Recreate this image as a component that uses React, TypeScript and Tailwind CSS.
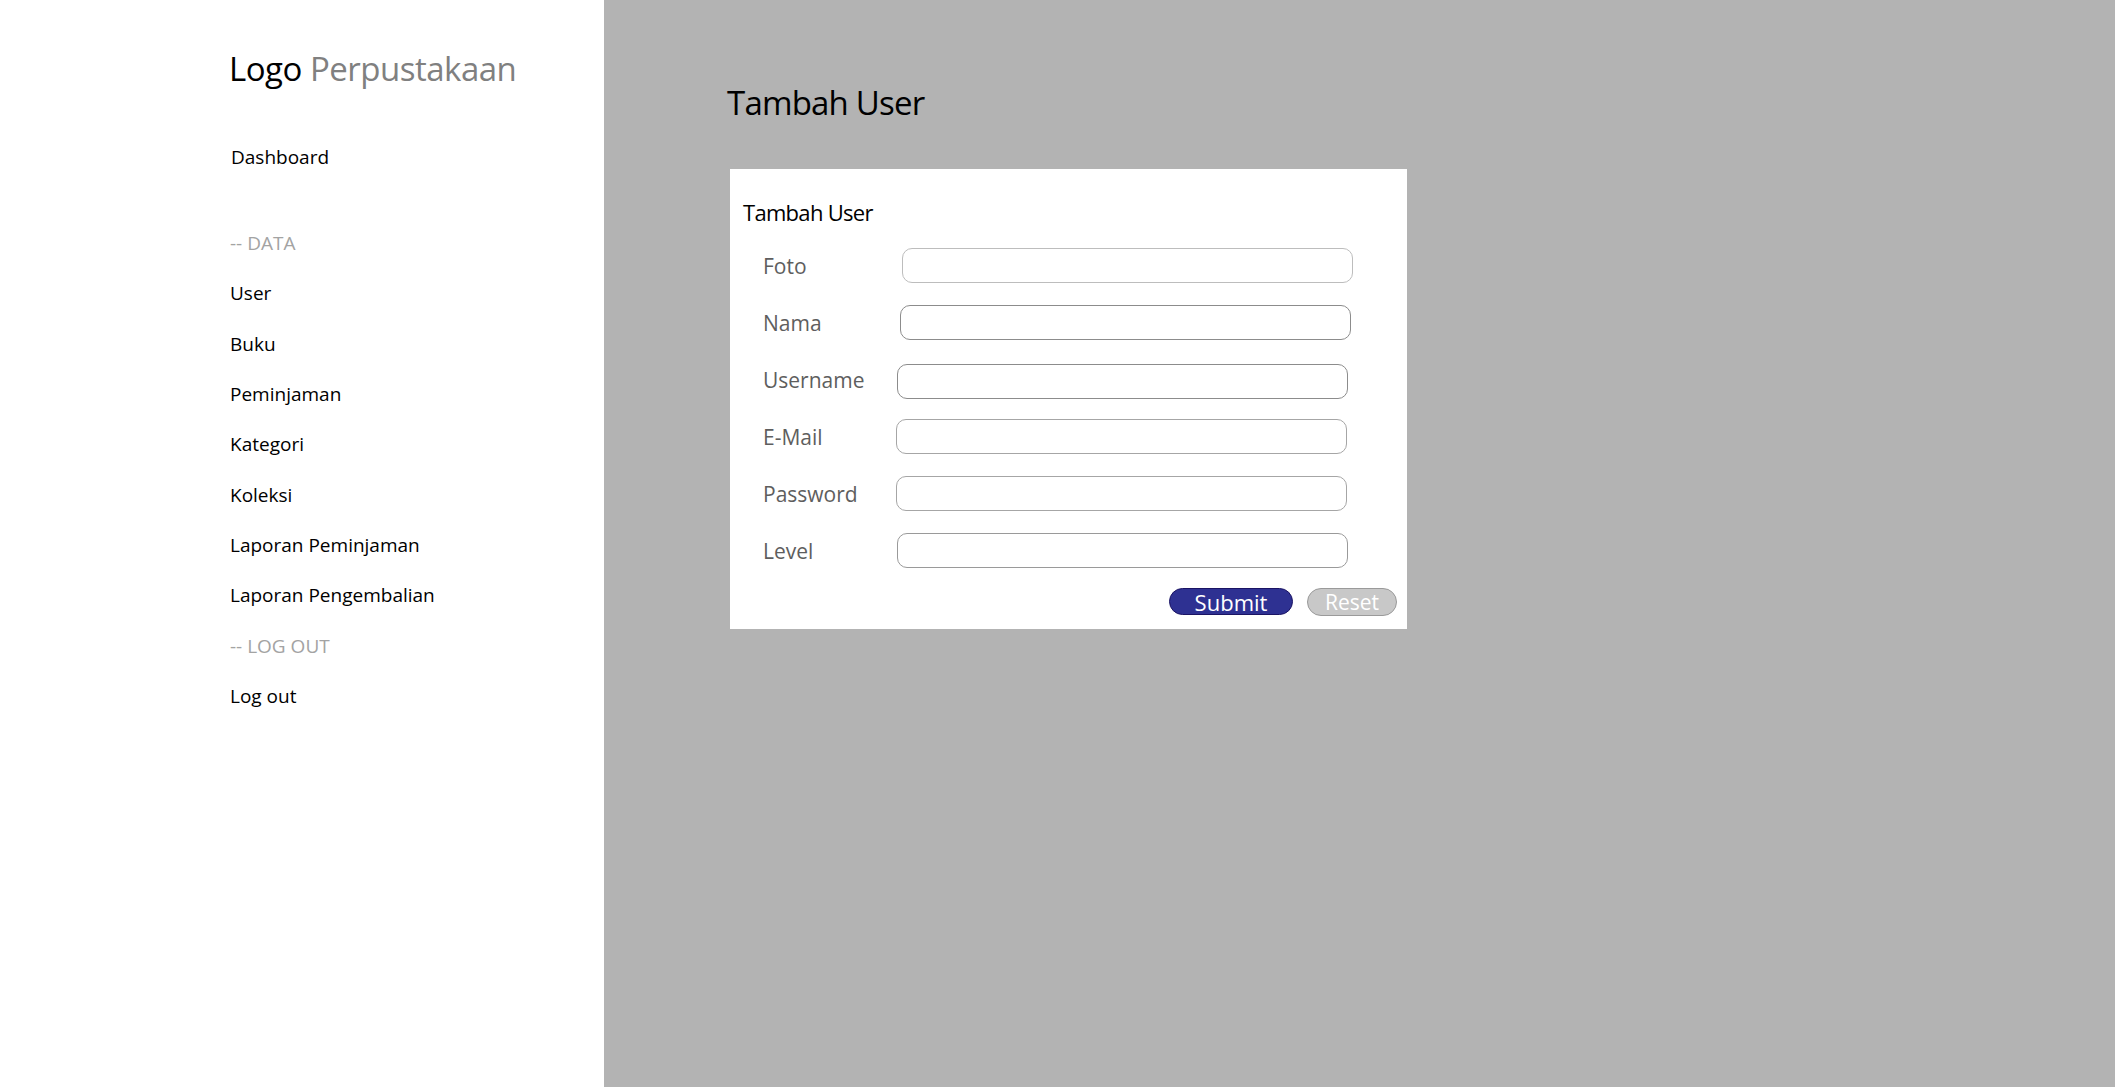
const navItems = [
  'User',
  'Buku',
  'Peminjaman',
  'Kategori',
  'Koleksi',
  'Laporan Peminjaman',
  'Laporan Pengembalian',
];

// label column width differs a little per row, like the mockup
const fields = [
  { label: 'Foto', labelWidth: 'w-[139px]', border: 'border-[#bdbdbd]', shift: '' },
  { label: 'Nama', labelWidth: 'w-[137px]', border: 'border-[#8c8c8c]', shift: '' },
  { label: 'Username', labelWidth: 'w-[134px]', border: 'border-[#8c8c8c]', shift: 'translate-y-[2px]' },
  { label: 'E-Mail', labelWidth: 'w-[133px]', border: 'border-[#a6a6a6]', shift: '' },
  { label: 'Password', labelWidth: 'w-[133px]', border: 'border-[#a6a6a6]', shift: '' },
  { label: 'Level', labelWidth: 'w-[134px]', border: 'border-[#9a9a9a]', shift: '' },
];

function Sidebar() {
  return (
    <aside className="w-[604px] shrink-0 bg-white pl-[230px] pt-[49px]">
      <h1 className="-ml-[1px] text-[33px] leading-[40px] tracking-[-0.5px]">
        <span className="text-black">Logo</span>{' '}
        <span className="text-[#808080]">Perpustakaan</span>
      </h1>

      <nav className="mt-[42.5px] text-[19px] leading-[50.3px] text-black">
        <a href="#" className="block pl-[1px]">
          Dashboard
        </a>

        <div className="mt-[36.4px]">
          <p className="text-[#a3a3a3]">-- DATA</p>
          <ul>
            {navItems.map((item) => (
              <li key={item}>
                <a href="#" className="block">
                  {item}
                </a>
              </li>
            ))}
          </ul>
          <p className="text-[#a3a3a3]">-- LOG OUT</p>
          <a href="#" className="block">
            Log out
          </a>
        </div>
      </nav>
    </aside>
  );
}

function UserForm() {
  return (
    <section className="ml-[3px] mt-[45.6px] h-[460px] w-[677px] bg-white pl-[13px] pt-[29px]">
      <h3 className="text-[22px] leading-[28px] tracking-[-0.7px] text-black">Tambah User</h3>

      <form className="mt-[22.5px]" onSubmit={(e) => e.preventDefault()}>
        <div className="flex flex-col gap-[22px]">
          {fields.map((field) => (
            <div key={field.label} className="flex h-[35px] items-center pl-[20px]">
              <label className={`${field.labelWidth} shrink-0 text-[21px] leading-[28px] text-[#5e5e5e]`}>
                {field.label}
              </label>
              <input
                type="text"
                className={`h-[35px] w-[451px] rounded-[10px] border-[1.5px] ${field.border} ${field.shift} bg-white px-3 text-[18px] outline-none`}
              />
            </div>
          ))}
        </div>

        <div className="mt-[20px] flex justify-end gap-[14px] pr-[10px]">
          <button
            type="submit"
            className="flex h-[27px] w-[124px] items-center justify-center rounded-full border border-[#1b1464] bg-[#2e3192] text-[22px] leading-none text-white"
          >
            Submit
          </button>
          <button
            type="reset"
            className="flex h-[28px] w-[90px] items-center justify-center rounded-full border border-[#9a9a9a] bg-[#c8c8c8] text-[21px] leading-none text-white"
          >
            Reset
          </button>
        </div>
      </form>
    </section>
  );
}

export default function App() {
  return (
    <div className="flex h-[1087px] w-full font-['Open_Sans',sans-serif]">
      <Sidebar />
      <main className="flex-1 bg-[#b3b3b3] pl-[123px] pt-[83px]">
        <h2 className="text-[33px] leading-[40px] tracking-[-0.8px] text-black">Tambah User</h2>
        <UserForm />
      </main>
    </div>
  );
}
